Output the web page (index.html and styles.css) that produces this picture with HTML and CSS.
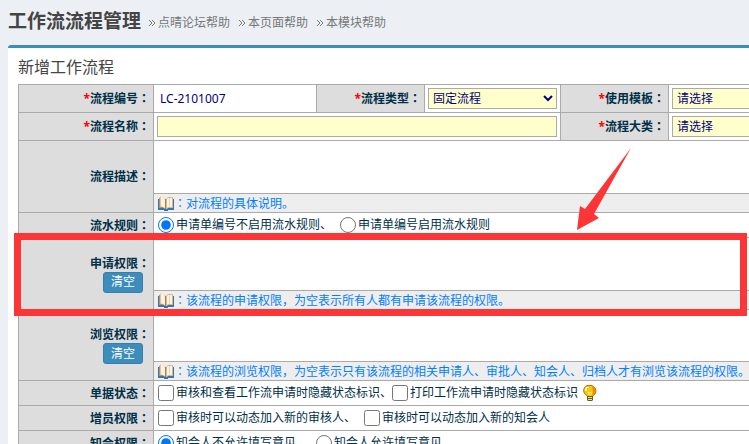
FILE: index.html
```
<!DOCTYPE html>
<html lang="zh-CN">
<head>
    <meta charset="UTF-8">
    <meta name="viewport" content="width=device-width, initial-scale=1.0">
    <title>工作流流程管理</title>
    <link rel="stylesheet" href="styles.css">
</head>
<body>
    <svg class="sprite" aria-hidden="true">
        <symbol id="raquo" viewBox="0 0 8 8">
            <path d="M1 1l3 3-3 3M4 1l3 3-3 3" fill="none" stroke="#777" stroke-width="1"/>
        </symbol>
        <symbol id="book" viewBox="0 0 16 16">
            <path d="M0 4h1v9h5l2 1 2-1h5V4h1v11h-6v1H6v-1H0z" fill="#2f78b5"/>
            <path d="M1 3l2-2 5 3v10l-2-1H1z" fill="#e3c49a"/>
            <path d="M3 1l3 2 1 2v8l-4-2z" fill="#fbf3e4"/>
            <path d="M1 3h1v9h3l1 1H1z" fill="#b98f62"/>
            <path d="M8 4l2-2h5v11h-5l-2 1z" fill="#d9b889"/>
            <path d="M9 4l1-1h4v9h-4l-1 1z" fill="#fbf3e4"/>
            <path d="M7 4h1v10H7z" fill="#a87c50"/>
            <path d="M11 3h1v9h-1z" fill="#ead6b8"/>
        </symbol>
        <symbol id="bulb" viewBox="0 0 14 16">
            <path d="M4 .5h5l3 2.500l1 3-1 3-2.500 2v1.500h-5V11L1.500 8.500l-1-3 1-3z" fill="#ffc20a" stroke="#c86a00"/>
            <path d="M9 1l3 2 .5 3-1 2.500L9 10.500l1-4z" fill="#f08a00"/>
            <path d="M3 2h3v1H4v3H2V4z" fill="#fffbd0"/>
            <path d="M5 7l1 3M9 7l-1 3M5 7l2 1 2-1" fill="none" stroke="#fff27a"/>
            <path d="M4 11h6v4l-1 1H5l-1-1z" fill="#6b5a1e"/>
            <path d="M5 12h4v1H5zM5 14h4v1H5z" fill="#f3e08a"/>
        </symbol>
    </svg>

    <header class="page-header">
        <h1>工作流流程管理</h1>
        <nav class="help">
            <a href="#"><svg><use href="#raquo"/></svg>点晴论坛帮助</a>
            <a href="#"><svg><use href="#raquo"/></svg>本页面帮助</a>
            <a href="#"><svg><use href="#raquo"/></svg>本模块帮助</a>
        </nav>
    </header>

    <main class="box">
        <h2>新增工作流程</h2>
        <form class="table-wrap">
            <table class="form-table">
                <colgroup>
                    <col class="c-label">
                    <col class="c-code">
                    <col class="c-side">
                    <col class="c-type">
                    <col class="c-side">
                    <col>
                </colgroup>
                <tr class="field-row">
                    <th><i>*</i><label for="code">流程编号<span class="mid">：</span></label></th>
                    <td><input type="text" id="code" class="plain" value="LC-2101007" readonly></td>
                    <th><i>*</i><label for="type">流程类型<span class="mid">：</span></label></th>
                    <td><select id="type"><option>固定流程</option></select></td>
                    <th><i>*</i><label for="tpl">使用模板<span class="mid">：</span></label></th>
                    <td><select id="tpl"><option>请选择</option></select></td>
                </tr>
                <tr class="field-row">
                    <th><i>*</i><label for="name">流程名称<span class="mid">：</span></label></th>
                    <td colspan="3"><input type="text" id="name"></td>
                    <th><i>*</i><label for="category">流程大类<span class="mid">：</span></label></th>
                    <td><select id="category"><option>请选择</option></select></td>
                </tr>
                <tr class="area-row">
                    <th rowspan="2"><label for="desc">流程描述<span class="mid">：</span></label></th>
                    <td colspan="5"><textarea id="desc"></textarea></td>
                </tr>
                <tr class="hint-row">
                    <td colspan="5"><div class="line"><svg class="icon"><use href="#book"/></svg><span><span class="mid">：</span>对流程的具体说明。</span></div></td>
                </tr>
                <tr class="option-row">
                    <th>流水规则<span class="mid">：</span></th>
                    <td colspan="5">
                        <div class="line spaced">
                            <label><input type="radio" name="serial" checked>申请单编号不启用流水规则、</label>
                            <label><input type="radio" name="serial">申请单编号启用流水规则</label>
                        </div>
                    </td>
                </tr>
                <tr class="area-row">
                    <th rowspan="2"><label for="apply">申请权限<span class="mid">：</span></label><button type="button">清空</button></th>
                    <td colspan="5"><textarea id="apply"></textarea></td>
                </tr>
                <tr class="hint-row">
                    <td colspan="5"><div class="line"><svg class="icon"><use href="#book"/></svg><span><span class="mid">：</span>该流程的申请权限，为空表示所有人都有申请该流程的权限。</span></div></td>
                </tr>
                <tr class="area-row compact">
                    <th rowspan="2"><label for="view">浏览权限<span class="mid">：</span></label><button type="button">清空</button></th>
                    <td colspan="5"><textarea id="view"></textarea></td>
                </tr>
                <tr class="hint-row">
                    <td colspan="5"><div class="line"><svg class="icon"><use href="#book"/></svg><span><span class="mid">：</span>该流程的浏览权限，为空表示只有该流程的相关申请人、审批人、知会人、归档人才有浏览该流程的权限。</span></div></td>
                </tr>
                <tr class="option-row">
                    <th>单据状态<span class="mid">：</span></th>
                    <td colspan="5">
                        <div class="line">
                            <label><input type="checkbox">审核和查看工作流申请时隐藏状态标识、</label>
                            <label><input type="checkbox">打印工作流申请时隐藏状态标识</label>
                            <svg class="icon bulb"><use href="#bulb"/></svg>
                        </div>
                    </td>
                </tr>
                <tr class="option-row">
                    <th>增员权限<span class="mid">：</span></th>
                    <td colspan="5">
                        <div class="line spaced">
                            <label><input type="checkbox">审核时可以动态加入新的审核人、</label>
                            <label><input type="checkbox">审核时可以动态加入新的知会人</label>
                        </div>
                    </td>
                </tr>
                <tr class="option-row">
                    <th>知会权限<span class="mid">：</span></th>
                    <td colspan="5">
                        <div class="line spaced">
                            <label><input type="radio" name="notify" checked>知会人不允许填写意见、</label>
                            <label><input type="radio" name="notify">知会人允许填写意见</label>
                        </div>
                    </td>
                </tr>
            </table>
        </form>
        <div class="mark-frame"></div>
        <svg class="mark-arrow" viewBox="0 0 56 84"><path d="M55 1L18 67l5 4L1 83 4 59l5 3z" fill="#fc3636"/></svg>
    </main>
</body>
</html>
```
FILE: styles.css
```
* {
    box-sizing: border-box;
}
body {
    margin: 0;
    padding-left: 8px;
    height: 100vh;
    overflow: hidden;
    background-color: #ecf0f5;
    color: #003048;
    font-family: "Noto Sans", "Noto Sans CJK SC", sans-serif;
    font-size: 12px;
    line-height: 18px;
}
.sprite {
    display: none;
}
/* colon centred in its cell */
.mid {
    font-family: "Noto Sans CJK TC", sans-serif;
    font-feature-settings: "locl" 0;
}

/* header */
.page-header {
    display: flex;
    align-items: center;
    gap: 7px;
    height: 45px;
    padding-bottom: 3px;
}
h1 {
    margin: 0;
    color: #444;
    font-size: 19px;
    line-height: 26px;
}
.help {
    display: flex;
    gap: 8px;
    padding-top: 3px;
}
.help a {
    display: flex;
    align-items: center;
    gap: 2px;
    color: #777;
    text-decoration: none;
}
.help svg {
    width: 8px;
    height: 8px;
}

/* main box */
.box {
    position: relative;
    padding: 7px 0 0 10px;
    border-top: 3px solid #3c8dbc;
    border-radius: 3px 0 0 0;
    background-color: #fff;
}
h2 {
    margin: 0;
    padding-bottom: 5px;
    color: #444;
    font-size: 16px;
    font-weight: normal;
    line-height: 24px;
}
.table-wrap {
    overflow: hidden;
}
.form-table {
    table-layout: fixed;
    width: 100%;
    min-width: 880px;
    border-collapse: collapse;
}
.c-label { width: 135px; }
.c-code { width: 163px; }
.c-side { width: 108px; }
.c-type { width: 136px; }
th, td {
    padding: 0 3px;
    border: 1px solid #aaa;
}
th {
    background-color: #ddd;
    line-height: 16px;
    text-align: right;
}
th i {
    color: #f00;
    font-style: normal;
}
.field-row { height: 28px; }
.area-row { height: 53px; }
.area-row.compact { height: 52px; }
.hint-row { height: 19px; }
.option-row { height: 25px; }

.hint-row td {
    background-color: #eee;
    color: #0080ff;
}
.line {
    display: flex;
    align-items: center;
    height: 18px;
    padding-left: 1px;
    white-space: nowrap;
}
.line label {
    display: flex;
    align-items: center;
    gap: 2px;
}
.spaced {
    gap: 8px;
}
.icon {
    width: 16px;
    height: 16px;
}
.bulb {
    margin-left: 4px;
}

/* controls */
input, select, textarea, button {
    font: inherit;
}
input[type="text"], select {
    display: block;
    width: 100%;
    height: 21px;
    padding: 0 2px;
    border: 1px solid #aaa;
    border-radius: 0;
    background-color: #ffc;
    color: #000080;
}
select {
    padding: 0;
}
input.plain {
    border-color: transparent;
    background-color: transparent;
}
input[type="radio"], input[type="checkbox"] {
    width: 16px;
    height: 16px;
    margin: 0;
}
textarea {
    display: block;
    width: 100%;
    height: 48px;
    padding: 0;
    border: 0;
    resize: none;
    color: #000080;
}
button {
    display: block;
    height: 21px;
    margin: 0 7px 0 auto;
    padding: 0 7px;
    border: 1px solid #367fa9;
    border-radius: 3px;
    background-color: #3c8dbc;
    color: #fff;
    font-weight: normal;
    cursor: pointer;
}
button:hover {
    background-color: #367fa9;
}

/* red mark over the apply row */
.mark-frame {
    position: absolute;
    top: 185px;
    left: 6px;
    right: 2px;
    height: 83px;
    border: 7px solid #fc3636;
    pointer-events: none;
}
.mark-arrow {
    position: absolute;
    top: 99px;
    left: 568px;
    width: 56px;
    height: 84px;
    pointer-events: none;
}
```
